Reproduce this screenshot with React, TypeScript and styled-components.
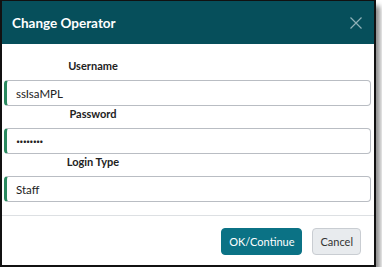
import styled, { createGlobalStyle } from "styled-components";

const Global = createGlobalStyle`
  html, body { margin: 0; padding: 0; background: #fff; }
  body { font-family: Lato, "Open Sans", sans-serif; }
`;

const Dialog = styled.div`
  width: 372px;
  border: 2px solid #111;
  border-top-width: 1px;
  background: #fff;
  box-shadow: 4px 6px 5px rgba(0, 0, 0, 0.45);
`;

const Header = styled.div`
  height: 43px;
  background: #064f5b;
  display: flex;
  align-items: center;
  justify-content: space-between;
  padding: 0 11px 0 10px;
`;

const Title = styled.h1`
  margin: 0;
  color: #fff;
  font: 700 13.5px Lato, "Open Sans", sans-serif;
`;

const Close = styled.button`
  border: none;
  background: none;
  padding: 0;
  width: 14px;
  height: 14px;
  display: flex;
  cursor: pointer;
`;

const Body = styled.div`
  padding: 14px 3px 13px 2px;
  border-bottom: 1px solid #dde0e3;
`;

const Label = styled.label`
  display: block;
  width: 178px;
  text-align: center;
  font: 700 11px Lato, "Open Sans", sans-serif;
  line-height: 16px;
  color: #222;
  margin-bottom: 6px;
`;

const Input = styled.input`
  box-sizing: border-box;
  display: block;
  width: 100%;
  height: 26px;
  border: 1px solid #b9bdc3;
  border-left: 3px solid #2a8a5f;
  border-radius: 4px;
  padding: 0 9px;
  font: 400 11.5px Lato, "Open Sans", sans-serif;
  color: #222;
  outline: none;

  &[type="password"] {
    font: 400 11px "Open Sans", sans-serif;
    letter-spacing: -0.8px;
  }
`;

const Footer = styled.div`
  display: flex;
  justify-content: flex-end;
  gap: 10px;
  padding: 12px 13px 10px;
`;

const Button = styled.button<{ $primary?: boolean }>`
  height: 27px;
  padding: 0 7px;
  border-radius: 4px;
  border: 1px solid ${(p) => (p.$primary ? "#0b7285" : "#c9cdd2")};
  background: ${(p) => (p.$primary ? "#0b7285" : "#e8ebee")};
  color: ${(p) => (p.$primary ? "#fff" : "#333")};
  font: 400 11px Lato, "Open Sans", sans-serif;
  cursor: pointer;
`;

export default function App() {
  return (
    <>
      <Global />
      <Dialog>
        <Header>
          <Title>Change Operator</Title>
          <Close aria-label="Close">
            <svg width="14" height="14" viewBox="0 0 14 14">
              <path d="M1.5 1.5L12.5 12.5M12.5 1.5L1.5 12.5" stroke="#8fb1b7" strokeWidth="1.2" />
            </svg>
          </Close>
        </Header>
        <Body>
          <Label>Username</Label>
          <Input defaultValue="ssIsaMPL" />
          <Label>Password</Label>
          <Input type="password" defaultValue="12345678" />
          <Label>Login Type</Label>
          <Input defaultValue="Staff" />
        </Body>
        <Footer>
          <Button $primary>OK/Continue</Button>
          <Button>Cancel</Button>
        </Footer>
      </Dialog>
    </>
  );
}
